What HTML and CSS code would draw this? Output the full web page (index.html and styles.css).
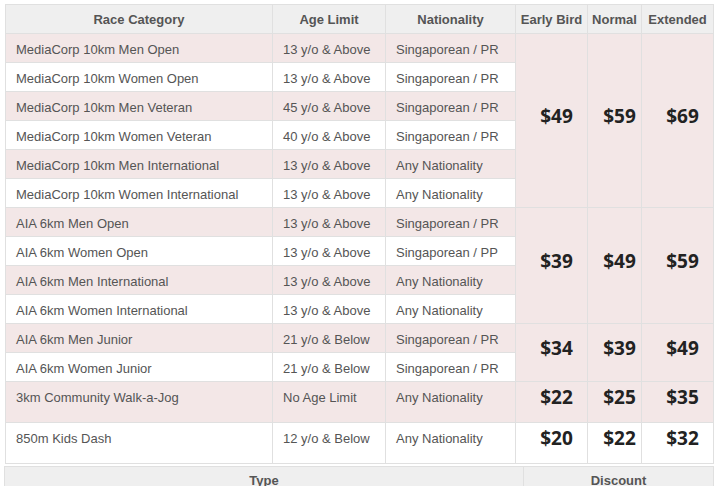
FILE: index.html
```html
<!DOCTYPE html>
<html lang="en">
<head>
<meta charset="utf-8">
<title>Race Categories</title>
<link rel="stylesheet" href="styles.css">
</head>
<body>
<div class="wrap">
  <table class="pricing">
    <colgroup>
      <col class="c-cat"><col class="c-age"><col class="c-nat"><col class="c-eb"><col class="c-norm"><col class="c-ext">
    </colgroup>
    <thead>
      <tr><th>Race Category</th><th>Age Limit</th><th>Nationality</th><th>Early Bird</th><th>Normal</th><th>Extended</th></tr>
    </thead>
    <tbody>
      <tr class="alt"><td>MediaCorp 10km Men Open</td><td>13 y/o &amp; Above</td><td>Singaporean / PR</td><td class="price" rowspan="6">$49</td><td class="price" rowspan="6">$59</td><td class="price" rowspan="6">$69</td></tr>
      <tr><td>MediaCorp 10km Women Open</td><td>13 y/o &amp; Above</td><td>Singaporean / PR</td></tr>
      <tr class="alt"><td>MediaCorp 10km Men Veteran</td><td>45 y/o &amp; Above</td><td>Singaporean / PR</td></tr>
      <tr><td>MediaCorp 10km Women Veteran</td><td>40 y/o &amp; Above</td><td>Singaporean / PR</td></tr>
      <tr class="alt"><td>MediaCorp 10km Men International</td><td>13 y/o &amp; Above</td><td>Any Nationality</td></tr>
      <tr><td>MediaCorp 10km Women International</td><td>13 y/o &amp; Above</td><td>Any Nationality</td></tr>
      <tr class="alt"><td>AIA 6km Men Open</td><td>13 y/o &amp; Above</td><td>Singaporean / PR</td><td class="price" rowspan="4">$39</td><td class="price" rowspan="4">$49</td><td class="price" rowspan="4">$59</td></tr>
      <tr><td>AIA 6km Women Open</td><td>13 y/o &amp; Above</td><td>Singaporean / PP</td></tr>
      <tr class="alt"><td>AIA 6km Men International</td><td>13 y/o &amp; Above</td><td>Any Nationality</td></tr>
      <tr><td>AIA 6km Women International</td><td>13 y/o &amp; Above</td><td>Any Nationality</td></tr>
      <tr class="alt"><td>AIA 6km Men Junior</td><td>21 y/o &amp; Below</td><td>Singaporean / PR</td><td class="price" rowspan="2">$34</td><td class="price" rowspan="2">$39</td><td class="price" rowspan="2">$49</td></tr>
      <tr><td>AIA 6km Women Junior</td><td>21 y/o &amp; Below</td><td>Singaporean / PR</td></tr>
      <tr class="alt"><td>3km Community Walk-a-Jog</td><td>No Age Limit</td><td>Any Nationality</td><td class="price">$22</td><td class="price">$25</td><td class="price">$35</td></tr>
      <tr><td>850m Kids Dash</td><td>12 y/o &amp; Below</td><td>Any Nationality</td><td class="price">$20</td><td class="price">$22</td><td class="price">$32</td></tr>
    </tbody>
  </table>
  <table class="discounts">
    <colgroup><col class="d-type"><col class="d-disc"></colgroup>
    <thead>
      <tr><th>Type</th><th>Discount</th></tr>
    </thead>
  </table>
</div>
</body>
</html>
```
FILE: styles.css
```css
html, body {
  margin: 0;
  padding: 0;
  background: #ffffff;
}
body {
  font-family: "Liberation Sans", Arial, sans-serif;
  font-size: 13px;
  color: #555555;
}
.wrap {
  padding: 4px 0 0 4px;
}
table {
  border-collapse: collapse;
  table-layout: fixed;
}
th, td {
  border: 1px solid #e0e0e0;
  padding: 8px 10px 4px;
  line-height: 16px;
  text-align: left;
  vertical-align: top;
  white-space: nowrap;
}
th {
  background: #efefef;
  font-weight: bold;
  text-align: center;
  padding: 7px 0 5px;
}
.pricing {
  margin-left: 1px;
  width: 709px;
}
.c-cat { width: 267px; }
.c-age { width: 113px; }
.c-nat { width: 130px; }
.c-eb { width: 72px; }
.c-norm { width: 54px; }
.c-ext { width: 72px; }
.pricing tr.alt td {
  background: #f3e7e7;
}
.pricing td.price {
  font-family: "Open Sans", "DejaVu Sans", sans-serif;
  font-weight: 700;
  font-size: 19px;
  line-height: 26px;
  color: #222222;
  text-align: center;
  vertical-align: middle;
  padding: 2px 0 12px 10px;
}
.discounts {
  margin-top: 2px;
  width: 710px;
}
.d-type { width: 519px; }
.d-disc { width: 190px; }
.discounts th {
  padding-top: 6px;
}
```
